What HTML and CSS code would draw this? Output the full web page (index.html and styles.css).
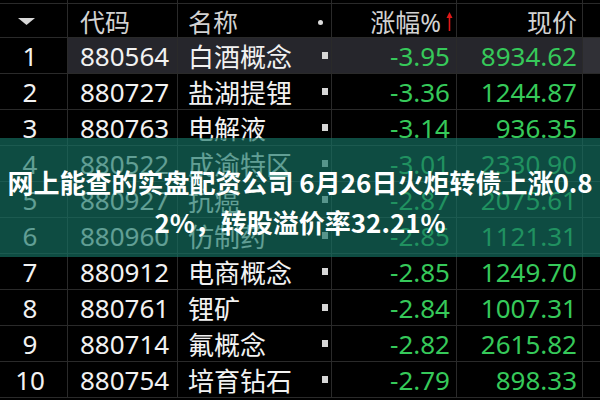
FILE: index.html
```html
<!DOCTYPE html>
<html lang="zh">
<head>
<meta charset="utf-8">
<link rel="stylesheet" href="styles.css">
</head>
<body>
<div class="screen">
  <div class="grid">
    <div class="cell"></div><div class="cell"></div><div class="cell"></div><div class="cell"></div><div class="cell"></div><div class="cell"></div>

    <div class="cell hd idx"><svg class="tri" width="17" height="7" viewBox="0 0 17 7"><polygon points="0,0 17,0 8.5,7" fill="#d8d8d8"/></svg></div>
    <div class="cell hd code">代码</div>
    <div class="cell hd name"><span>名称</span><i class="dot"></i></div>
    <div class="cell hd num">涨幅%<svg class="arrow" width="7" height="19" viewBox="0 0 7 19"><path d="M3.5 19V5" stroke="#e01818" stroke-width="1.6"/><path d="M0.5 6L3.5 0L6.5 6Z" fill="#e01818"/></svg></div>
    <div class="cell hd price">现价</div>
    <div class="cell"></div>

    <div class="cell idx">1</div><div class="cell code sel">880564</div><div class="cell name sel"><span>白酒概念</span><i class="sq"></i></div><div class="cell num sel">-3.95</div><div class="cell price sel">8934.62</div><div class="cell sel2"></div>
    <div class="cell idx">2</div><div class="cell code">880727</div><div class="cell name"><span>盐湖提锂</span><i class="sq"></i></div><div class="cell num">-3.36</div><div class="cell price">1244.87</div><div class="cell"></div>
    <div class="cell idx">3</div><div class="cell code">880763</div><div class="cell name"><span>电解液</span><i class="sq"></i></div><div class="cell num">-3.14</div><div class="cell price">936.35</div><div class="cell"></div>
    <div class="cell idx">4</div><div class="cell code">880522</div><div class="cell name"><span>成渝特区</span><i class="sq"></i></div><div class="cell num">-3.01</div><div class="cell price">2330.90</div><div class="cell"></div>
    <div class="cell idx">5</div><div class="cell code">880927</div><div class="cell name"><span>抗癌</span><i class="sq"></i></div><div class="cell num">-2.87</div><div class="cell price">2075.61</div><div class="cell"></div>
    <div class="cell idx">6</div><div class="cell code">880960</div><div class="cell name"><span>仿制药</span><i class="sq"></i></div><div class="cell num">-2.85</div><div class="cell price">1121.31</div><div class="cell"></div>
    <div class="cell idx">7</div><div class="cell code">880912</div><div class="cell name"><span>电商概念</span><i class="sq"></i></div><div class="cell num">-2.85</div><div class="cell price">1249.70</div><div class="cell"></div>
    <div class="cell idx">8</div><div class="cell code">880761</div><div class="cell name"><span>锂矿</span><i class="sq"></i></div><div class="cell num">-2.84</div><div class="cell price">1007.31</div><div class="cell"></div>
    <div class="cell idx">9</div><div class="cell code">880714</div><div class="cell name"><span>氟概念</span><i class="sq"></i></div><div class="cell num">-2.82</div><div class="cell price">2615.82</div><div class="cell"></div>
    <div class="cell idx">10</div><div class="cell code">880754</div><div class="cell name"><span>培育钻石</span><i class="sq"></i></div><div class="cell num">-2.79</div><div class="cell price">898.33</div><div class="cell"></div>
  </div>

  <div class="banner">
    <p class="title">网上能查的实盘配资公司 6月26日火炬转债上涨0.82%，转股溢价率32.21%</p>
  </div>
</div>
</body>
</html>
```

FILE: styles.css
```css
html, body {
  margin: 0;
  padding: 0;
  background: #000;
}

.screen {
  position: relative;
  width: 600px;
  height: 400px;
  overflow: hidden;
  background: #000;
  font-family: "Noto Sans", "Noto Sans CJK SC", sans-serif;
}

.grid {
  display: grid;
  grid-template-columns: 67px 109px 153px 124px 125px 17px;
  grid-template-rows: 3px 33px repeat(10, 35px);
  gap: 1px;
  background: #2a2a2a;
  padding-bottom: 1px;
}

.cell {
  background: #000;
  color: #f2f2f2;
  font-size: 26px;
  display: flex;
  align-items: center;
  white-space: nowrap;
  overflow: hidden;
}

.hd {
  color: #d2d2d2;
  font-size: 25px;
}

.idx {
  justify-content: center;
  padding-right: 7px;
}

.tri {
  margin-right: 7px;
  margin-top: 2px;
}

.code {
  padding-left: 12px;
}

.name {
  padding-left: 10px;
  padding-right: 2px;
  justify-content: space-between;
}

.num {
  justify-content: flex-end;
  padding-right: 6px;
  color: #36c95a;
}

.price {
  justify-content: flex-end;
  padding-right: 5px;
  color: #36c95a;
}

.hd.num, .hd.price {
  color: #d2d2d2;
}

.hd.num {
  padding-right: 3px;
}

.arrow {
  margin-left: 5px;
  margin-top: 2px;
}

.sel {
  background: #26262c;
}

.sel2 {
  background: #303036;
}

.sq {
  width: 6px;
  height: 7px;
  background: #d6d6d6;
  margin-right: 1px;
}

.dot {
  width: 5px;
  height: 5px;
  border-radius: 50%;
  background: #dcdcdc;
  margin-right: 6px;
  margin-top: 3px;
}

.banner {
  position: absolute;
  left: 0;
  top: 138px;
  width: 600px;
  height: 119px;
  box-sizing: border-box;
  padding: 24px 5px 15px;
  background: rgba(21, 115, 100, 0.66);
}

.title {
  margin: 0;
  color: #fff;
  font-weight: 700;
  font-size: 26px;
  line-height: 40px;
  text-align: center;
  word-break: break-all;
  font-family: "Noto Sans CJK SC", sans-serif;
}
```
